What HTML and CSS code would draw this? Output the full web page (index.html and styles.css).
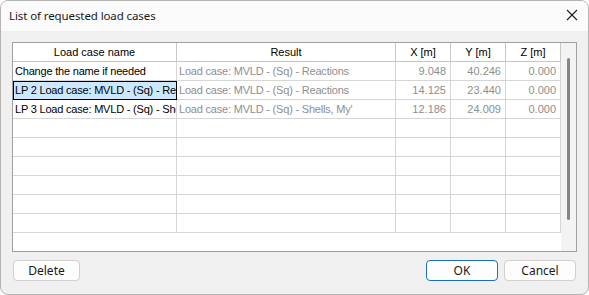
FILE: index.html
```html
<!DOCTYPE html>
<html>
<head>
<meta charset="utf-8">
<link rel="stylesheet" href="styles.css">
</head>
<body>
<div class="window">
  <div class="titlebar">
    <span class="title">List of requested load cases</span>
    <svg class="close" width="12" height="12" viewBox="0 0 12 12"><path d="M1 1 L11 11 M11 1 L1 11" stroke="#1b1b1b" stroke-width="1.1" fill="none"/></svg>
  </div>
  <div class="content">
    <div class="table">
      <div class="grid">
        <div class="row head">
          <div class="cell c1">Load case name</div>
          <div class="cell c2">Result</div>
          <div class="cell c3">X [m]</div>
          <div class="cell c4">Y [m]</div>
          <div class="cell c5">Z [m]</div>
        </div>
        <div class="row">
          <div class="cell c1">Change the name if needed</div>
          <div class="cell c2 dim">Load case: MVLD - (Sq) - Reactions</div>
          <div class="cell c3 dim num">9.048</div>
          <div class="cell c4 dim num">40.246</div>
          <div class="cell c5 dim num">0.000</div>
        </div>
        <div class="row">
          <div class="cell c1 sel">LP 2 Load case: MVLD - (Sq) - Reactions</div>
          <div class="cell c2 dim">Load case: MVLD - (Sq) - Reactions</div>
          <div class="cell c3 dim num">14.125</div>
          <div class="cell c4 dim num">23.440</div>
          <div class="cell c5 dim num">0.000</div>
        </div>
        <div class="row">
          <div class="cell c1">LP 3 Load case: MVLD - (Sq) - Shells, My'</div>
          <div class="cell c2 dim">Load case: MVLD - (Sq) - Shells, My'</div>
          <div class="cell c3 dim num">12.186</div>
          <div class="cell c4 dim num">24.009</div>
          <div class="cell c5 dim num">0.000</div>
        </div>
        <div class="row"><div class="cell c1"></div><div class="cell c2"></div><div class="cell c3"></div><div class="cell c4"></div><div class="cell c5"></div></div>
        <div class="row"><div class="cell c1"></div><div class="cell c2"></div><div class="cell c3"></div><div class="cell c4"></div><div class="cell c5"></div></div>
        <div class="row"><div class="cell c1"></div><div class="cell c2"></div><div class="cell c3"></div><div class="cell c4"></div><div class="cell c5"></div></div>
        <div class="row"><div class="cell c1"></div><div class="cell c2"></div><div class="cell c3"></div><div class="cell c4"></div><div class="cell c5"></div></div>
        <div class="row"><div class="cell c1"></div><div class="cell c2"></div><div class="cell c3"></div><div class="cell c4"></div><div class="cell c5"></div></div>
        <div class="row"><div class="cell c1"></div><div class="cell c2"></div><div class="cell c3"></div><div class="cell c4"></div><div class="cell c5"></div></div>
      </div>
      <div class="vscroll"><div class="thumb"></div></div>
    </div>
    <div class="buttons">
      <button class="btn">Delete</button>
      <div class="spacer"></div>
      <button class="btn primary">OK</button>
      <button class="btn">Cancel</button>
    </div>
  </div>
</div>
</body>
</html>
```

FILE: styles.css
```css
html, body {
  margin: 0;
  padding: 0;
  background: #ffffff;
}
.window {
  width: 589px;
  height: 295px;
  box-sizing: border-box;
  border: 1px solid #b4b4b4;
  border-radius: 8px;
  overflow: hidden;
  background: #f0f0f0;
  display: flex;
  flex-direction: column;
}
.titlebar {
  height: 30px;
  flex: none;
  background: #fbfbfb;
  display: flex;
  align-items: center;
  padding: 0 10px 0 8px;
  font-family: "Noto Sans", "Open Sans", sans-serif;
  font-size: 11.5px;
  letter-spacing: -0.1px;
  color: #1a1a1a;
}
.title {
  flex: 1;
  position: relative;
  top: -1px;
}
.close {
  position: relative;
  top: -1px;
}
.content {
  flex: 1;
  display: flex;
  flex-direction: column;
  padding: 11px 11px 0 11px;
}
.table {
  height: 210px;
  box-sizing: border-box;
  border: 1px solid #a0a0a0;
  background: #ffffff;
  display: flex;
}
.grid {
  width: 548px;
  height: 208px;
  overflow: hidden;
  display: flex;
  flex-direction: column;
}
.row {
  display: flex;
  height: 19px;
  flex: none;
}
.cell {
  box-sizing: border-box;
  height: 19px;
  border-right: 1px solid #d6d6d6;
  border-bottom: 1px solid #d6d6d6;
  font-family: "Liberation Sans", Arial, sans-serif;
  font-size: 11px;
  letter-spacing: -0.2px;
  line-height: 18px;
  color: #000;
  white-space: nowrap;
  overflow: hidden;
  padding: 0 2px;
}
.head .cell {
  text-align: center;
  letter-spacing: 0;
  border-right-color: #c8c8c8;
  border-bottom-color: #c8c8c8;
}
.c1 { width: 164px; }
.c2 { width: 219px; }
.c3, .c4, .c5 { width: 55px; }
.dim { color: #8e8e8e; }
.num { text-align: right; padding-right: 4px; letter-spacing: 0; }
.sel {
  background: #cce8ff;
  outline: 1px solid #000;
  outline-offset: -1px;
}
.vscroll {
  flex: 1;
  background: #f3f3f3;
  position: relative;
}
.thumb {
  position: absolute;
  left: 6px;
  top: 15px;
  width: 3px;
  height: 162px;
  border-radius: 2px;
  background: #868686;
}
.buttons {
  display: flex;
  gap: 6px;
  margin: 8px 1px 0 1px;
}
.spacer { flex: 1; }
.btn {
  width: 67px;
  height: 21px;
  box-sizing: border-box;
  margin: 0;
  padding: 0;
  border: 1px solid #d0d0d0;
  border-radius: 4px;
  background: #fdfdfd;
  font-family: "Noto Sans", "Open Sans", sans-serif;
  font-size: 12px;
  color: #1a1a1a;
  line-height: 18px;
}
.btn.primary, .btn + .btn {
  width: 72px;
}
.btn.primary {
  border-color: #1a6fc0;
}
```
